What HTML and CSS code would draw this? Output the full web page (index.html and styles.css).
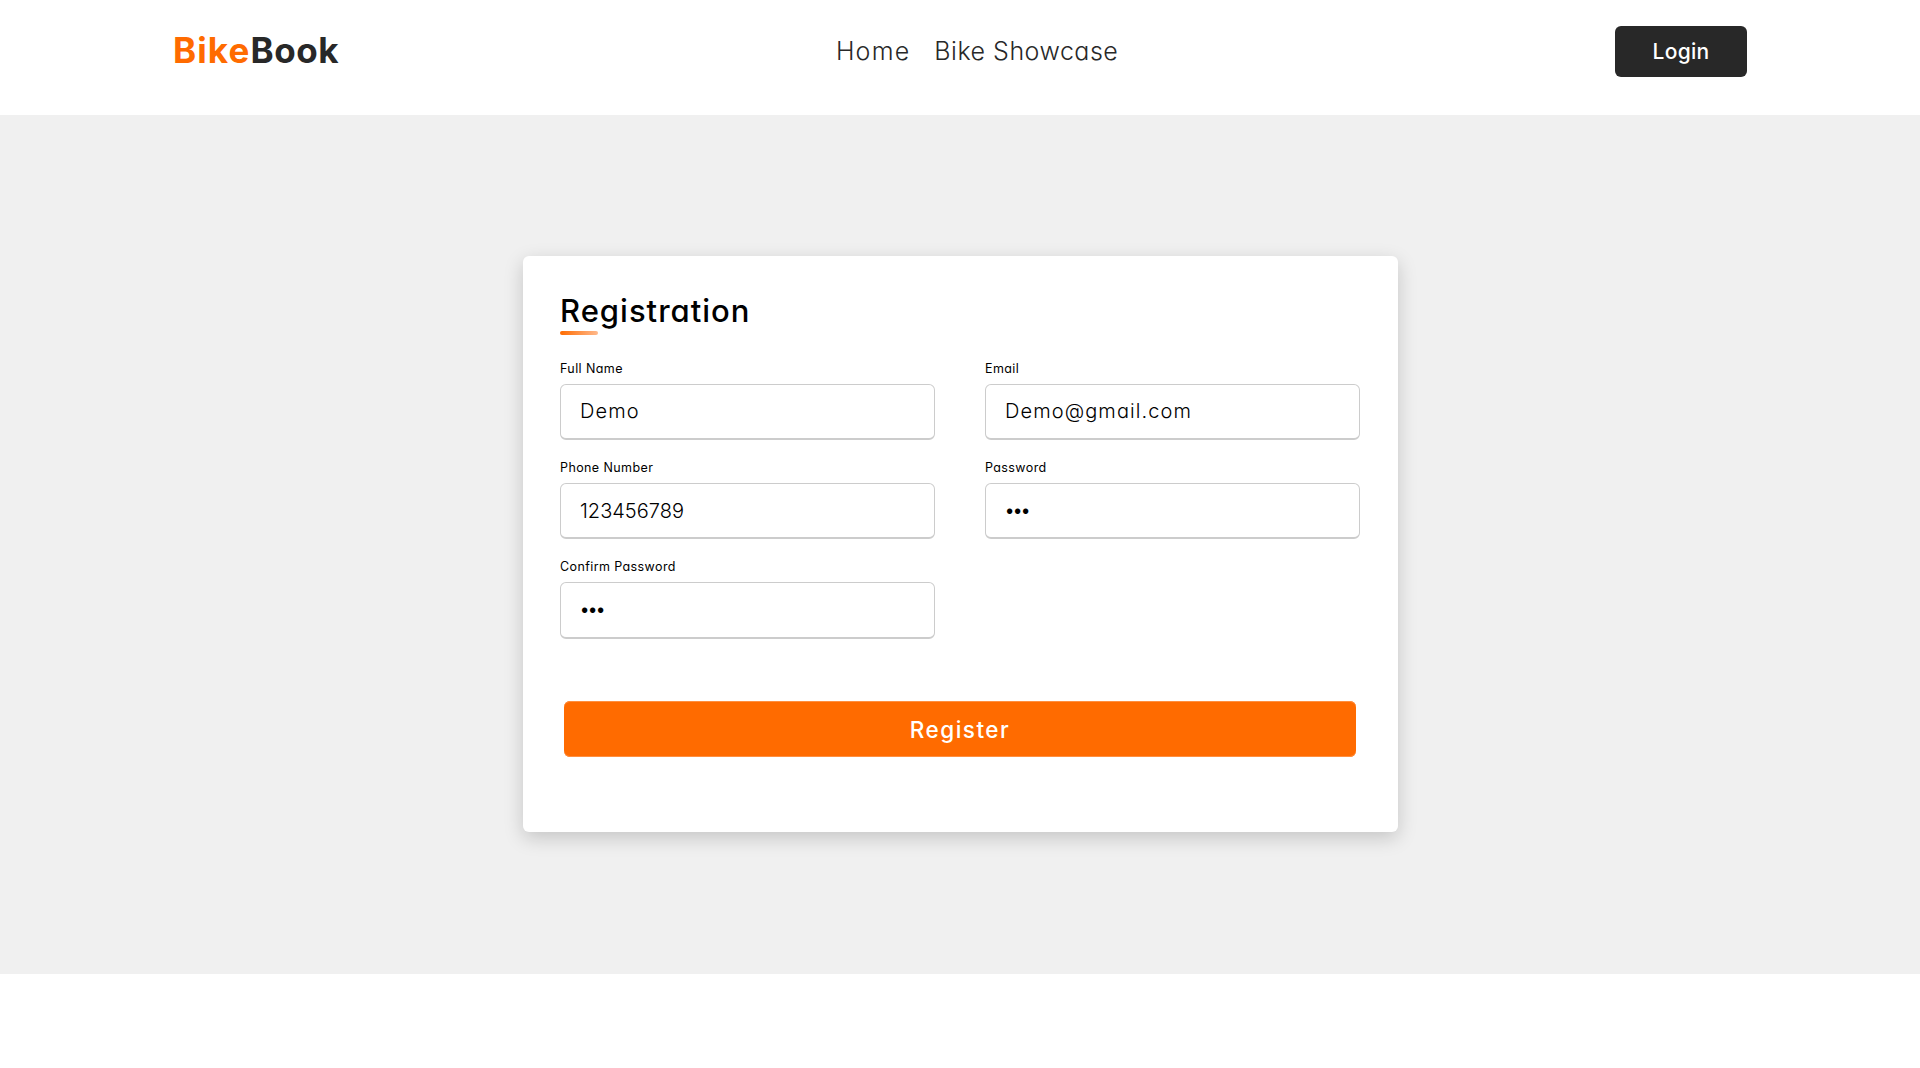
FILE: index.html
```html
<!DOCTYPE html>
<html lang="en">
<head>
<meta charset="utf-8">
<title>BikeBook</title>
<link rel="stylesheet" href="styles.css">
</head>
<body>
<header class="header">
  <a class="logo"><span class="logo-accent">Bike</span><span class="logo-rest">Book</span></a>
  <nav class="nav">
    <a class="nav-home">Home</a>
    <a class="nav-showcase">Bike Showcase</a>
  </nav>
  <button class="login"><span>Login</span></button>
</header>
<main class="main">
  <form class="card">
    <h1 class="title"><span>Registration</span></h1>
    <div class="fields">
      <label class="field"><span class="label">Full Name</span><input class="input" type="text" value="Demo"></label>
      <label class="field"><span class="label">Email</span><input class="input input-email" type="text" value="Demo@gmail.com"></label>
      <label class="field"><span class="label">Phone Number</span><input class="input input-phone" type="text" value="123456789"></label>
      <label class="field"><span class="label">Password</span><input class="input input-password" type="password" value="123"></label>
      <label class="field"><span class="label">Confirm Password</span><input class="input input-password input-confirm" type="password" value="123"></label>
    </div>
    <button class="register" type="button"><span>Register</span></button>
  </form>
</main>
</body>
</html>
```
FILE: styles.css
```css
* { box-sizing: border-box; margin: 0; padding: 0; }

body {
  font-family: Inter, "Open Sans", sans-serif;
  font-feature-settings: "cv11" 1;
  background: #fff;
  color: #000;
}

button, input {
  font-family: inherit;
  font-feature-settings: inherit;
  border: 0;
}

.header {
  height: 115px;
  padding: 26px 173px 38px;
  display: flex;
  justify-content: space-between;
  align-items: center;
}

.logo { padding-bottom: 2px; font-size: 35px; font-weight: 700; line-height: 49px; }
.logo-accent { color: #ff6b00; letter-spacing: 1.1px; }
.logo-rest { color: #282828; letter-spacing: 0.6px; }

.nav {
  display: flex;
  gap: 24px;
  padding-bottom: 2px;
  font-size: 25px;
  font-weight: 350;
  color: #282828;
}

.nav-home { letter-spacing: 1.2px; }
.nav-showcase { letter-spacing: 0.5px; }

.login {
  width: 132px;
  height: 51px;
  border-radius: 6px;
  background: #282828;
  color: #fff;
  font-size: 21px;
  font-weight: 500;
  letter-spacing: 0.3px;
}

.main {
  height: 859px;
  padding-top: 141px;
  background: #f0f0f0;
}

.card {
  width: 875px;
  height: 576px;
  margin: 0 auto;
  padding: 31px 37.5px;
  border-radius: 6px;
  background: #fff;
  box-shadow: 0 6px 19px rgba(0, 0, 0, 0.18);
}

.title {
  height: 48px;
  line-height: 48px;
  font-size: 31px;
  font-weight: 500;
  letter-spacing: 1px;
}

.title::after {
  content: "";
  display: block;
  width: 38px;
  height: 4px;
  margin-top: -4px;
  border-radius: 2px;
  background: linear-gradient(to right, #ff6b00, #ffb98c);
}

.fields {
  display: grid;
  grid-template-columns: 375px 375px;
  gap: 15px 50px;
  margin-top: 21px;
}

.field { display: block; height: 84px; }

.label {
  display: block;
  height: 28px;
  line-height: 26px;
  font-size: 12.5px;
  font-weight: 400;
  letter-spacing: 0.4px;
}

.input {
  display: block;
  width: 375px;
  height: 56px;
  padding: 0 19px 2px;
  border: 1px solid #ccc;
  border-bottom-width: 2px;
  border-radius: 6px;
  background: #fff;
  color: #000;
  font-size: 20px;
  font-weight: 350;
  letter-spacing: 1.1px;
}

.input-phone { padding-bottom: 0; font-weight: 300; letter-spacing: 0; }
.input-password { padding-left: 18px; font-weight: 300; letter-spacing: -3.2px; }
.input-confirm { height: 57px; }

.register {
  display: block;
  width: 792px;
  height: 56px;
  margin: 63px auto 0;
  border-radius: 6px;
  background: #ff6b00;
  box-shadow: inset 0 1px #ff8f40, inset 0 -1px #ff8f40;
  color: #fff;
  font-size: 22.5px;
  font-weight: 550;
  letter-spacing: 1.5px;
}
```
